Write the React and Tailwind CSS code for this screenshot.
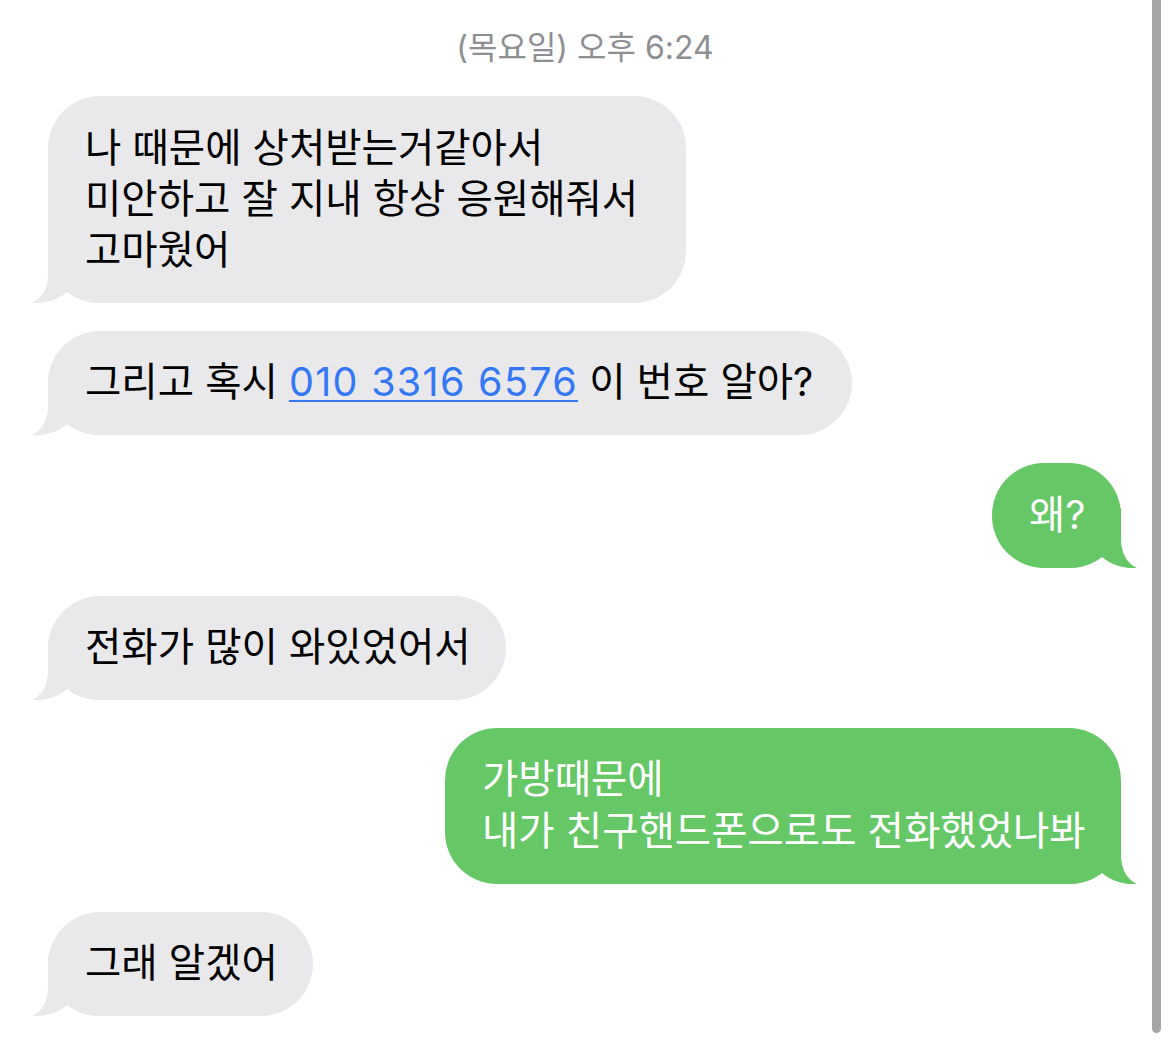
import React from "react";

const FONT = "font-['Inter','Noto_Sans_CJK_KR',sans-serif]";

function TailLeft() {
  return (
    <svg
      className="absolute left-[-16px] bottom-0"
      width="72"
      height="60"
      viewBox="0 0 72 60"
    >
      <path
        d="M16 0 L16 30 C16 46 10 55 0 60 C13 61 26 57 35 49 C45 57 56 60 72 60 L72 0 Z"
        fill="#e9e9eb"
      />
    </svg>
  );
}

function TailRight() {
  return (
    <svg
      className="absolute right-[-16px] bottom-0"
      width="72"
      height="60"
      viewBox="0 0 72 60"
    >
      <path
        d="M56 0 L56 30 C56 46 62 55 72 60 C59 61 46 57 37 49 C27 57 16 60 0 60 L0 0 Z"
        fill="#66c766"
      />
    </svg>
  );
}

function Incoming({ width, children }) {
  return (
    <div className={`relative self-start ml-[48px] ${width}`}>
      <TailLeft />
      <div className="relative bg-[#e9e9eb] rounded-[52px] pl-[37px] pr-[20px] py-[26.5px] text-[39.5px] leading-[51.33px] text-black whitespace-nowrap">
        {children}
      </div>
    </div>
  );
}

function Outgoing({ width, children }) {
  return (
    <div className={`relative self-end mr-[49px] ${width}`}>
      <TailRight />
      <div className="relative bg-[#66c766] rounded-[52px] pl-[37px] pr-[20px] py-[26.5px] text-[39.5px] leading-[51.33px] text-white whitespace-nowrap">
        {children}
      </div>
    </div>
  );
}

export default function App() {
  return (
    <div className={`relative w-full min-h-[1044px] bg-white overflow-hidden ${FONT}`}>
      <div className="pt-[28px] text-center text-[32px] leading-[40px] text-[#8e8e93]">
        (목요일) 오후 6:24
      </div>

      <div className="flex flex-col gap-[28px] pt-[28px] pb-[30px]">
        <Incoming width="w-[638px]">
          나 때문에 상처받는거같아서
          <br />
          미안하고 잘 지내 항상 응원해줘서
          <br />
          고마웠어
        </Incoming>

        <Incoming width="w-[804px]">
          그리고 혹시{" "}
          <span className="text-[#3478f6] underline decoration-2 underline-offset-[4px] tracking-[1.3px]">
            010 3316 6576
          </span>{" "}
          이 번호 알아?
        </Incoming>

        <Outgoing width="w-[129px]">왜?</Outgoing>

        <Incoming width="w-[458px]">전화가 많이 와있었어서</Incoming>

        <Outgoing width="w-[676px]">
          가방때문에
          <br />
          내가 친구핸드폰으로도 전화했었나봐
        </Outgoing>

        <Incoming width="w-[265px]">그래 알겠어</Incoming>
      </div>

      <div className="absolute top-0 left-[1152px] w-[9px] h-[1033px] bg-[#a6a6a6] rounded-b-[5px]" />
    </div>
  );
}
